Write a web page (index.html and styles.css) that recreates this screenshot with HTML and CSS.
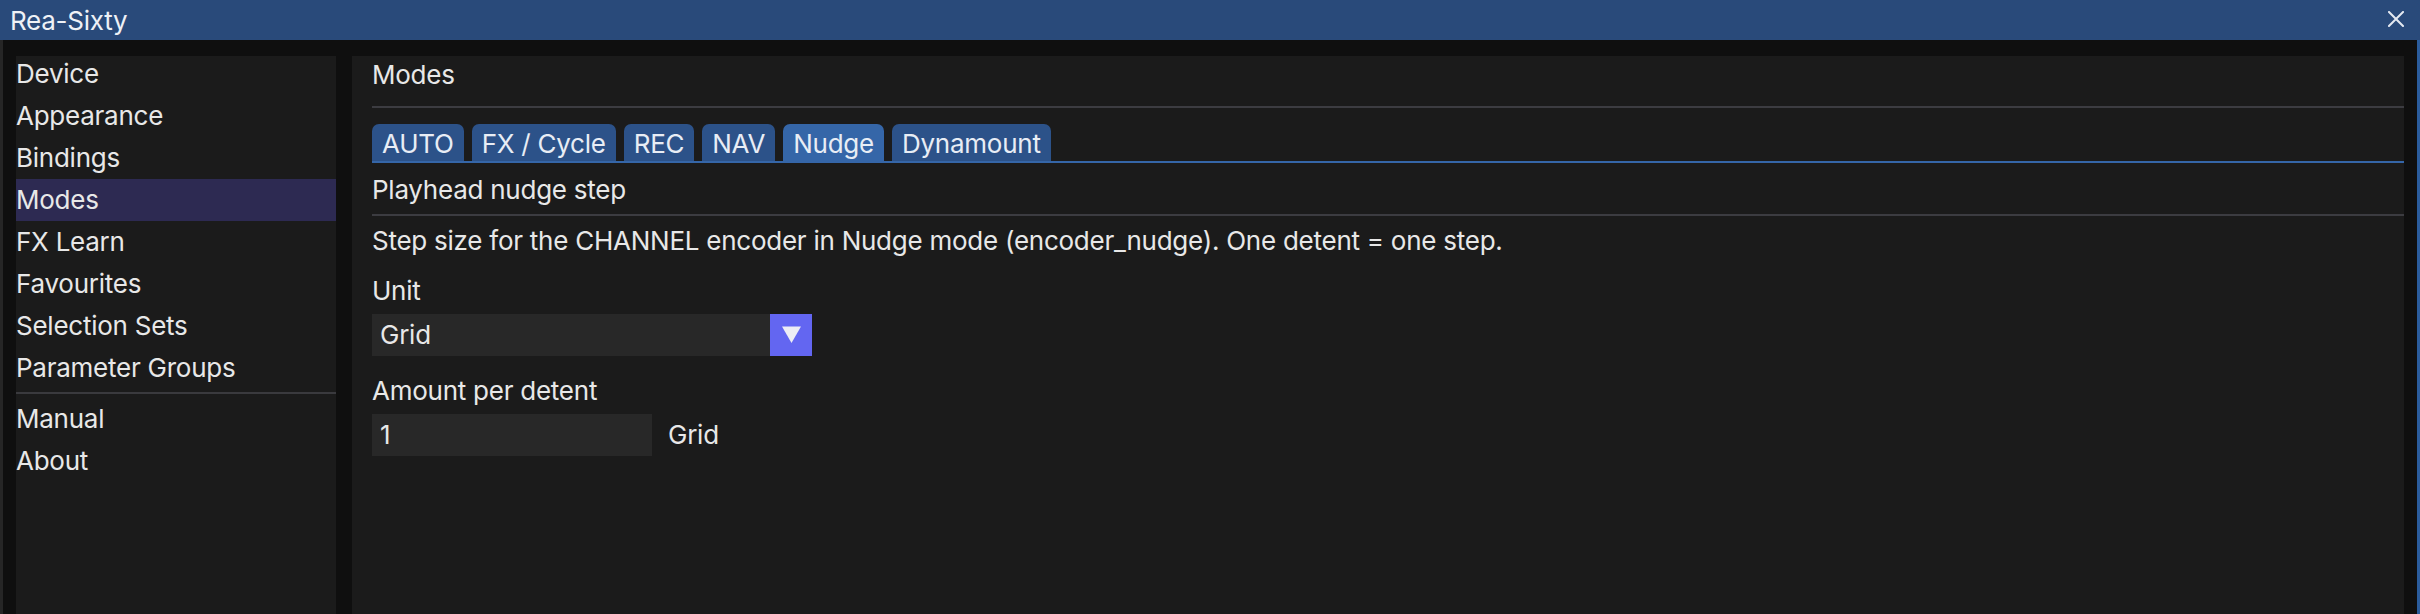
FILE: index.html
```html
<!DOCTYPE html>
<html lang="en">
<head>
<meta charset="utf-8">
<title>Rea-Sixty</title>
<link rel="stylesheet" href="styles.css">
</head>
<body>
<div class="window">
  <div class="titlebar">
    <span class="title">Rea-Sixty</span>
    <svg class="close" width="16" height="16" viewBox="0 0 16 16" aria-hidden="true">
      <path d="M1 1 L15 15 M15 1 L1 15" stroke="#e4e9f1" stroke-width="2" fill="none" stroke-linecap="square"/>
    </svg>
  </div>
  <div class="body">
    <div class="sidebar">
      <ul class="nav">
        <li class="nav-item">Device</li>
        <li class="nav-item">Appearance</li>
        <li class="nav-item">Bindings</li>
        <li class="nav-item selected">Modes</li>
        <li class="nav-item">FX Learn</li>
        <li class="nav-item">Favourites</li>
        <li class="nav-item">Selection Sets</li>
        <li class="nav-item">Parameter Groups</li>
        <li class="nav-sep"></li>
        <li class="nav-item">Manual</li>
        <li class="nav-item">About</li>
      </ul>
    </div>
    <div class="content">
      <div class="text-row heading">Modes</div>
      <div class="sep sep-top"></div>
      <div class="tabbar">
        <div class="tab">AUTO</div>
        <div class="tab">FX / Cycle</div>
        <div class="tab">REC</div>
        <div class="tab">NAV</div>
        <div class="tab active">Nudge</div>
        <div class="tab">Dynamount</div>
      </div>
      <div class="text-row section">Playhead nudge step</div>
      <div class="sep sep-section"></div>
      <div class="text-row desc">Step size for the CHANNEL encoder in Nudge mode (encoder_nudge). One detent = one step.</div>
      <div class="text-row label-unit">Unit</div>
      <div class="combo">
        <span class="combo-value">Grid</span>
        <span class="combo-btn">
          <svg width="42" height="42" viewBox="0 0 42 42" aria-hidden="true">
            <polygon points="12,12.5 31,12.5 21.5,29" fill="#ededf5"/>
          </svg>
        </span>
      </div>
      <div class="text-row label-amount">Amount per detent</div>
      <div class="input-row">
        <div class="input">1</div>
        <span class="input-suffix">Grid</span>
      </div>
    </div>
  </div>
</div>
</body>
</html>
```

FILE: styles.css
```css
* {
  box-sizing: border-box;
}

html, body {
  margin: 0;
  padding: 0;
  background: #0f0f0f;
}

body {
  font-family: "Inter", "Noto Sans", "DejaVu Sans", sans-serif;
  font-size: 26px;
  letter-spacing: -0.25px;
  color: #e8e8e8;
}

.window {
  width: 2420px;
  height: 614px;
  display: flex;
  flex-direction: column;
  overflow: hidden;
}

.titlebar {
  height: 40px;
  flex: 0 0 40px;
  background: #294a7a;
  display: flex;
  align-items: center;
  justify-content: space-between;
  padding: 0 16px 0 10px;
}

.title {
  line-height: 40px;
  padding-top: 2px;
  color: #eef1f6;
}

.close {
  display: block;
  margin-top: -2px;
}

.body {
  flex: 1;
  display: flex;
  gap: 16px;
  padding: 16px 13px 0 13px;
  background: #0f0f0f;
  border-left: 3px solid #262626;
  border-right: 3px solid #2b5c9c;
  min-height: 0;
}

.sidebar {
  width: 320px;
  flex: 0 0 320px;
  background: #1b1b1b;
  overflow: hidden;
}

.nav {
  list-style: none;
  margin: -3px 0 0 0;
  padding: 0;
}

.nav-item {
  height: 42px;
  line-height: 42px;
  white-space: nowrap;
}

.nav-item.selected {
  background: #2d2a52;
}

.nav-sep {
  height: 2px;
  margin: 3px 0 4px 0;
  background: #3a3a3e;
}

.content {
  flex: 1;
  background: #1b1b1b;
  padding: 6px 0 0 20px;
  overflow: hidden;
}

.text-row {
  height: 26px;
  line-height: 26px;
  white-space: nowrap;
}

.sep {
  height: 2px;
  background: #3c3c41;
}

.sep-top {
  margin-top: 18px;
}

.tabbar {
  margin-top: 16px;
  display: flex;
  gap: 8px;
  border-bottom: 2px solid #3566a8;
}

.tab {
  height: 37px;
  line-height: 35px;
  padding: 2px 10px 0 10px;
  background: #2c5289;
  color: #e8edf5;
  border-radius: 7px 7px 0 0;
  white-space: nowrap;
}

.tab.active {
  background: #3566a8;
}

.section {
  margin-top: 14px;
}

.sep-section {
  margin-top: 11px;
}

.desc {
  margin-top: 12px;
}

.label-unit {
  margin-top: 24px;
}

.combo {
  margin-top: 10px;
  width: 440px;
  height: 42px;
  display: flex;
  background: #282828;
}

.combo-value {
  flex: 1;
  line-height: 42px;
  padding-left: 8px;
}

.combo-btn {
  width: 42px;
  height: 42px;
  background: #6366f1;
}

.combo-btn svg {
  display: block;
}

.label-amount {
  margin-top: 22px;
}

.input-row {
  margin-top: 10px;
  display: flex;
  gap: 16px;
  align-items: center;
}

.input {
  width: 280px;
  height: 42px;
  line-height: 42px;
  padding-left: 8px;
  background: #282828;
}

.input-suffix {
  line-height: 42px;
}
```
